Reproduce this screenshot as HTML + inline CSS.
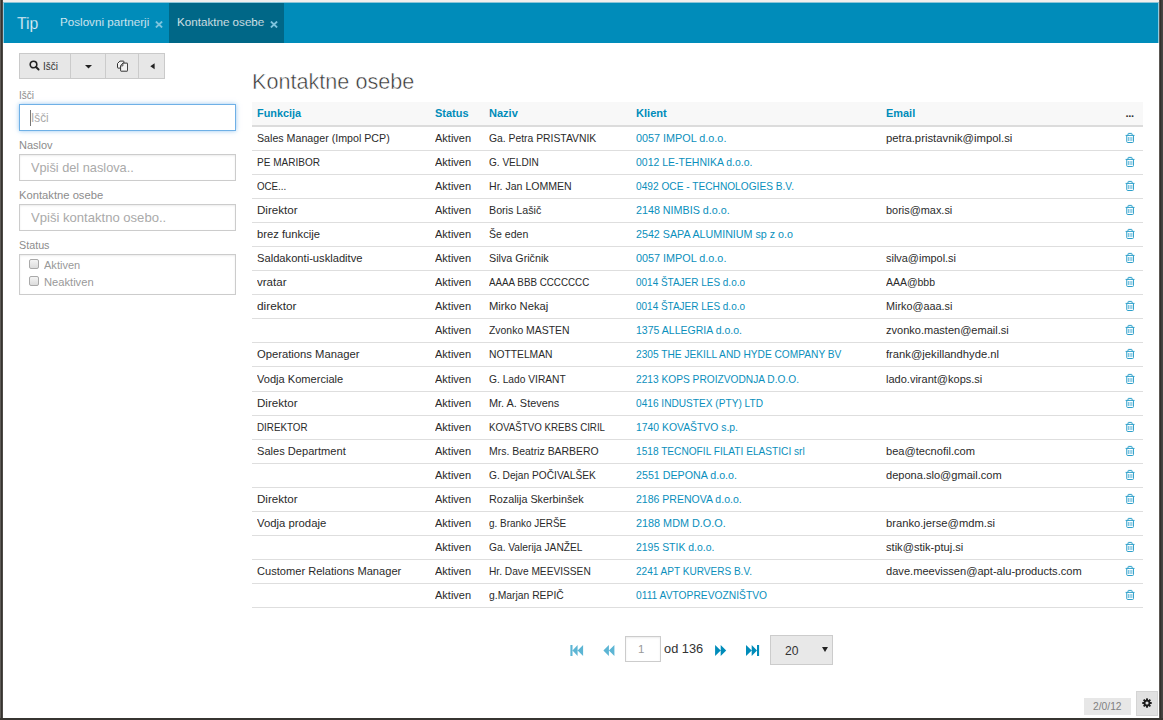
<!DOCTYPE html>
<html lang="sl">
<head>
<meta charset="utf-8">
<title>Kontaktne osebe</title>
<style>
*{box-sizing:border-box;margin:0;padding:0}
html,body{width:1163px;height:720px;overflow:hidden;background:#fff}
body{font-family:"Liberation Sans",sans-serif;font-size:11.2px;color:#222;position:relative}
.abs{position:absolute}
.sx{display:inline-block;transform-origin:0 50%;white-space:nowrap}
/* window frame */
#fl{left:0;top:0;width:3px;height:720px;background:linear-gradient(90deg,#5e5b57 0 1px,#36332f 1px 2px,#4d4a46 2px 3px)}
#fr{left:1159px;top:0;width:4px;height:720px;background:linear-gradient(90deg,#5b5854 0 1px,#33302d 1px 2px,#403e3c 2px 3px,#464543 3px 4px)}
#ft{left:3px;top:0;width:1156px;height:3px;background:#f1efed;border-bottom:1px solid #8cc5d8}
#fb{left:0;top:718px;width:1163px;height:2px;background:#373531}
#fll{left:3px;top:3px;width:1px;height:40px;background:#8fcbe0}
#frl{left:1158px;top:3px;width:1px;height:40px;background:#8fcbe0}
/* navbar */
#nav{left:4px;top:3px;width:1154px;height:40px;background:#008cba;color:#fff}
#nav .act{position:absolute;left:165px;top:0;width:115px;height:40px;background:#006787}
#nav .sx{position:absolute;color:#fff}
#t_tip{left:12.5px;top:10.8px;font-size:16.6px;color:#f2f9fc!important;-webkit-text-stroke:0.25px #008cba}
.tab{font-size:11.2px;top:13px;color:#fbfdfe!important;-webkit-text-stroke:0.22px #008cba}
#t_tab2w{-webkit-text-stroke-color:#006787}
.x{position:absolute;width:8px;height:7px}
/* left panel */
#btns{left:19px;top:53px;width:146px;height:26px;background:#e7e7e7;border:1px solid #cacaca}
#btns i{position:absolute;top:0;width:1px;height:24px;background:#cbcbcb}
.lbl{left:18.5px;font-size:11.2px;color:#8c8c8c;white-space:nowrap;line-height:13px}
.inp{left:19px;width:217px;height:27px;border:1px solid #ccc;background:#fff;box-shadow:inset 0 1px 2px rgba(0,0,0,.08);font-size:13px;color:#aaa;padding:0 0 0 10.5px;line-height:26px;white-space:nowrap}
.cb{position:absolute;width:10px;height:10px;border:1px solid #a9a9a9;border-radius:2px;background:linear-gradient(#f4f4f4,#dcdcdc)}
.cbl{position:absolute;left:23.7px;font-size:11.2px;color:#999;line-height:13px}
/* title */
#title{left:252.3px;top:68px;font-size:22.4px;color:#333;-webkit-text-stroke:0.5px #fff;white-space:nowrap;line-height:28px}
/* table */
#tbl{left:252px;top:102px;width:891px;border-collapse:separate;border-spacing:0;table-layout:fixed;font-size:11.2px}
#tbl th{height:25px;background:#f8f8f8;color:#008cba;text-align:left;font-weight:bold;padding:0 0 1px 5px;border-bottom:2px solid #dcdcdc;white-space:nowrap;line-height:13px}
#tbl td{height:24px;padding:0 0 0 5px;border-bottom:1px solid #dedede;white-space:nowrap;overflow:visible;color:#2a2a2a;line-height:13px}
#tbl tr.tall td{height:25px}
#tbl td.lk{color:#0a8fbc}
#tbl td.ic{padding:0}
.tr{width:10px;height:12px;display:block;margin-left:9px;margin-bottom:1px}
/* pager */
.pgi{position:absolute;top:645px;height:11px}
#pgin{left:625px;top:636px;width:36px;height:26px;border:1px solid #ccc;background:#fff;box-shadow:inset 0 1px 2px rgba(0,0,0,.08);font-size:11.5px;color:#999;line-height:25px;padding-left:12px}
#pgod{left:664px;top:640px;font-size:13.2px;color:#333;line-height:18px;white-space:nowrap}
#pgsel{left:770px;top:635px;width:63px;height:30px;background:#e8e8e8;border:1px solid #ccc;font-size:13.4px;color:#333;line-height:29px;padding-left:14.3px}
#pgsel:after{content:"";position:absolute;left:51px;top:10.5px;border:3px solid transparent;border-top:5px solid #222;border-bottom:0}
/* bottom right */
#cnt{left:1084px;top:698px;width:47px;height:16.5px;background:#e7e7e7;font-size:10px;color:#808080;line-height:17.5px;padding-left:9px}
#gear{left:1136px;top:691px;width:22px;height:25px;background:#e1e1e1;border:1px solid #d4d4d4}
</style>
</head>
<body>
<div id="nav" class="abs">
  <div class="act"></div>
  <span class="sx" id="t_tip" style="transform:scaleX(0.9538);">Tip</span>
  <span class="sx tab" id="t_tab1w" style="left:55.5px"><span class="sx" id="t_tab1" style="transform:scaleX(1.0405);">Poslovni partnerji</span></span><svg class="x" style="left:150.5px;top:17.6px" viewBox="0 0 8 7"><path d="M0.9 0.5L7.1 6.5M7.1 0.5L0.9 6.5" stroke="#7dc4dd" stroke-width="1.8" fill="none"/></svg>
  <span class="sx tab" id="t_tab2w" style="left:172.5px"><span class="sx" id="t_tab2" style="transform:scaleX(1.0395);">Kontaktne osebe</span></span><svg class="x" style="left:265.5px;top:17.6px" viewBox="0 0 8 7"><path d="M0.9 0.5L7.1 6.5M7.1 0.5L0.9 6.5" stroke="#7dc4dd" stroke-width="1.8" fill="none"/></svg>
</div>
<div id="fl" class="abs"></div><div id="fr" class="abs"></div><div id="ft" class="abs"></div><div id="fb" class="abs"></div>
<div id="fll" class="abs"></div><div id="frl" class="abs"></div>

<div id="btns" class="abs">
  <i style="left:50px"></i><i style="left:85px"></i><i style="left:118px"></i>
  <svg class="abs" style="left:9.1px;top:6.1px" width="11" height="11" viewBox="0 0 11 11"><circle cx="4.5" cy="4.5" r="3.3" fill="none" stroke="#222" stroke-width="1.6"/><path d="M7 7L9.6 9.5" stroke="#222" stroke-width="1.9" stroke-linecap="round"/></svg>
  <span class="abs" style="left:23px;top:6px;font-size:11.2px;color:#333;line-height:13px"><span class="sx" id="b_isci" style="transform:scaleX(0.8939);">Išči</span></span>
  <svg class="abs" style="left:65px;top:11px" width="7" height="4" viewBox="0 0 7 4"><path d="M0 0h7L3.5 3.6z" fill="#222"/></svg>
  <svg class="abs" style="left:96px;top:6px" width="12" height="12" viewBox="0 0 12 12"><g fill="#f3f3f3" stroke="#333" stroke-width="1" stroke-linejoin="round"><path d="M1.5 3.5L3.9 1.1h3.5q.5 0 .5.5v6q0 .5-.5.5H2q-.5 0-.5-.5z"/><path d="M4.6 5.8L6.9 3.1h4.2q.5 0 .5.5v7.1q0 .5-.5.5H5.1q-.5 0-.5-.5z"/><path d="M6.9 3.4v2.5H4.9" stroke-width=".8" fill="none"/></g></svg>
  <svg class="abs" style="left:130px;top:9px" width="5" height="7" viewBox="0 0 5 7"><path d="M4.6 0.3v6L0.3 3.3z" fill="#222"/></svg>
</div>
<div class="abs lbl" style="top:88.5px"><span class="sx" id="l_isci" style="transform:scaleX(0.8939);">Išči</span></div>
<div class="abs inp" style="top:104px;border-color:#6fb0e6;box-shadow:0 0 4.5px rgba(82,160,230,.6)"><i style="position:absolute;left:10px;top:5px;width:1px;height:16px;background:#777"></i><span class="sx" id="p_isci" style="transform:scaleX(0.9026);">Išči</span></div>
<div class="abs lbl" style="top:139px"><span class="sx" id="l_naslov" style="transform:scaleX(0.9824);">Naslov</span></div>
<div class="abs inp" style="top:154px"><span class="sx" id="p_naslov" style="transform:scaleX(0.9811);">Vpiši del naslova..</span></div>
<div class="abs lbl" style="top:189px"><span class="sx" id="l_kont" style="transform:scaleX(1.0026);">Kontaktne osebe</span></div>
<div class="abs inp" style="top:204px"><span class="sx" id="p_kont" style="transform:scaleX(1.0058);">Vpiši kontaktno osebo..</span></div>
<div class="abs lbl" style="top:238.5px"><span class="sx" id="l_status" style="transform:scaleX(0.9616);">Status</span></div>
<div class="abs inp" style="top:254px;height:41px;padding:0">
  <span class="cb" style="left:9px;top:4px"></span><span class="cbl" style="top:4px"><span class="sx" id="c_akt" style="transform:scaleX(0.9867);">Aktiven</span></span>
  <span class="cb" style="left:9px;top:21px"></span><span class="cbl" style="top:21px"><span class="sx" id="c_neakt" style="transform:scaleX(0.9970);">Neaktiven</span></span>
</div>

<div id="title" class="abs"><span class="sx" id="ttl" style="transform:scaleX(0.9657);">Kontaktne osebe</span></div>
<table id="tbl" class="abs">
<colgroup><col style="width:178px"><col style="width:54px"><col style="width:147px"><col style="width:250px"><col style="width:235px"><col style="width:27px"></colgroup>
<thead><tr><th><span class="sx" id="h_funkcija" style="transform:scaleX(0.9716);">Funkcija</span></th><th><span class="sx" id="h_status" style="transform:scaleX(0.9794);">Status</span></th><th><span class="sx" id="h_naziv" style="transform:scaleX(0.9851);">Naziv</span></th><th><span class="sx" id="h_klient" style="transform:scaleX(0.9911);">Klient</span></th><th><span class="sx" id="h_email" style="transform:scaleX(0.9779);">Email</span></th><th style="padding-left:9.5px"><span style="color:#333;letter-spacing:-0.3px">...</span></th></tr></thead>
<tbody>
<tr><td><span class="sx" id="r0c0" style="transform:scaleX(0.9527);">Sales Manager (Impol PCP)</span></td><td><span class="sx" id="r0c1" style="transform:scaleX(0.9840);">Aktiven</span></td><td><span class="sx" id="r0c2" style="transform:scaleX(0.9257);">Ga. Petra PRISTAVNIK</span></td><td class=lk><span class="sx" id="r0c3" style="transform:scaleX(0.9668);">0057 IMPOL d.o.o.</span></td><td><span class="sx" id="r0c4" style="transform:scaleX(1.0093);">petra.pristavnik@impol.si</span></td><td class="ic"><svg class="tr" viewBox="0 0 10 12"><g fill="none" stroke="#2c9fca" stroke-width="1"><path d="M0.6 3.4H9.5M3 3.3V2q0-.6.6-.6h2.9q.6 0 .6.6v1.3M1.75 3.6v6q0 .9.9.9h4.9q.9 0 .9-.9v-6"/><path d="M3.4 5v4M5.1 5v4M6.8 5v4" stroke-width="0.8" stroke="#48acd3"/></g></svg></td></tr>
<tr><td><span class="sx" id="r1c0" style="transform:scaleX(0.8968);">PE MARIBOR</span></td><td><span class="sx" id="r1c1" style="transform:scaleX(0.9840);">Aktiven</span></td><td><span class="sx" id="r1c2" style="transform:scaleX(0.8989);">G. VELDIN</span></td><td class=lk><span class="sx" id="r1c3" style="transform:scaleX(0.9359);">0012 LE-TEHNIKA d.o.o.</span></td><td></td><td class="ic"><svg class="tr" viewBox="0 0 10 12"><g fill="none" stroke="#2c9fca" stroke-width="1"><path d="M0.6 3.4H9.5M3 3.3V2q0-.6.6-.6h2.9q.6 0 .6.6v1.3M1.75 3.6v6q0 .9.9.9h4.9q.9 0 .9-.9v-6"/><path d="M3.4 5v4M5.1 5v4M6.8 5v4" stroke-width="0.8" stroke="#48acd3"/></g></svg></td></tr>
<tr><td><span class="sx" id="r2c0" style="transform:scaleX(0.8696);">OCE...</span></td><td><span class="sx" id="r2c1" style="transform:scaleX(0.9840);">Aktiven</span></td><td><span class="sx" id="r2c2" style="transform:scaleX(0.9440);">Hr. Jan LOMMEN</span></td><td class=lk><span class="sx" id="r2c3" style="transform:scaleX(0.9076);">0492 OCE - TECHNOLOGIES B.V.</span></td><td></td><td class="ic"><svg class="tr" viewBox="0 0 10 12"><g fill="none" stroke="#2c9fca" stroke-width="1"><path d="M0.6 3.4H9.5M3 3.3V2q0-.6.6-.6h2.9q.6 0 .6.6v1.3M1.75 3.6v6q0 .9.9.9h4.9q.9 0 .9-.9v-6"/><path d="M3.4 5v4M5.1 5v4M6.8 5v4" stroke-width="0.8" stroke="#48acd3"/></g></svg></td></tr>
<tr><td><span class="sx" id="r3c0" style="transform:scaleX(1.0365);">Direktor</span></td><td><span class="sx" id="r3c1" style="transform:scaleX(0.9840);">Aktiven</span></td><td><span class="sx" id="r3c2" style="transform:scaleX(0.9549);">Boris Lašič</span></td><td class=lk><span class="sx" id="r3c3" style="transform:scaleX(0.9596);">2148 NIMBIS d.o.o.</span></td><td><span class="sx" id="r3c4" style="transform:scaleX(0.9759);">boris@max.si</span></td><td class="ic"><svg class="tr" viewBox="0 0 10 12"><g fill="none" stroke="#2c9fca" stroke-width="1"><path d="M0.6 3.4H9.5M3 3.3V2q0-.6.6-.6h2.9q.6 0 .6.6v1.3M1.75 3.6v6q0 .9.9.9h4.9q.9 0 .9-.9v-6"/><path d="M3.4 5v4M5.1 5v4M6.8 5v4" stroke-width="0.8" stroke="#48acd3"/></g></svg></td></tr>
<tr><td><span class="sx" id="r4c0" style="transform:scaleX(1.0030);">brez funkcije</span></td><td><span class="sx" id="r4c1" style="transform:scaleX(0.9840);">Aktiven</span></td><td><span class="sx" id="r4c2" style="transform:scaleX(0.9415);">Še eden</span></td><td class=lk><span class="sx" id="r4c3" style="transform:scaleX(0.9576);">2542 SAPA ALUMINIUM sp z o.o</span></td><td></td><td class="ic"><svg class="tr" viewBox="0 0 10 12"><g fill="none" stroke="#2c9fca" stroke-width="1"><path d="M0.6 3.4H9.5M3 3.3V2q0-.6.6-.6h2.9q.6 0 .6.6v1.3M1.75 3.6v6q0 .9.9.9h4.9q.9 0 .9-.9v-6"/><path d="M3.4 5v4M5.1 5v4M6.8 5v4" stroke-width="0.8" stroke="#48acd3"/></g></svg></td></tr>
<tr><td><span class="sx" id="r5c0" style="transform:scaleX(0.9979);">Saldakonti-uskladitve</span></td><td><span class="sx" id="r5c1" style="transform:scaleX(0.9840);">Aktiven</span></td><td><span class="sx" id="r5c2" style="transform:scaleX(0.9610);">Silva Gričnik</span></td><td class=lk><span class="sx" id="r5c3" style="transform:scaleX(0.9668);">0057 IMPOL d.o.o.</span></td><td><span class="sx" id="r5c4" style="transform:scaleX(0.9767);">silva@impol.si</span></td><td class="ic"><svg class="tr" viewBox="0 0 10 12"><g fill="none" stroke="#2c9fca" stroke-width="1"><path d="M0.6 3.4H9.5M3 3.3V2q0-.6.6-.6h2.9q.6 0 .6.6v1.3M1.75 3.6v6q0 .9.9.9h4.9q.9 0 .9-.9v-6"/><path d="M3.4 5v4M5.1 5v4M6.8 5v4" stroke-width="0.8" stroke="#48acd3"/></g></svg></td></tr>
<tr><td><span class="sx" id="r6c0" style="transform:scaleX(1.0311);">vratar</span></td><td><span class="sx" id="r6c1" style="transform:scaleX(0.9840);">Aktiven</span></td><td><span class="sx" id="r6c2" style="transform:scaleX(0.8764);">AAAA BBB CCCCCCC</span></td><td class=lk><span class="sx" id="r6c3" style="transform:scaleX(0.8912);">0014 ŠTAJER LES d.o.o</span></td><td><span class="sx" id="r6c4" style="transform:scaleX(0.9347);">AAA@bbb</span></td><td class="ic"><svg class="tr" viewBox="0 0 10 12"><g fill="none" stroke="#2c9fca" stroke-width="1"><path d="M0.6 3.4H9.5M3 3.3V2q0-.6.6-.6h2.9q.6 0 .6.6v1.3M1.75 3.6v6q0 .9.9.9h4.9q.9 0 .9-.9v-6"/><path d="M3.4 5v4M5.1 5v4M6.8 5v4" stroke-width="0.8" stroke="#48acd3"/></g></svg></td></tr>
<tr><td><span class="sx" id="r7c0" style="transform:scaleX(1.0586);">direktor</span></td><td><span class="sx" id="r7c1" style="transform:scaleX(0.9840);">Aktiven</span></td><td><span class="sx" id="r7c2" style="transform:scaleX(1.0032);">Mirko Nekaj</span></td><td class=lk><span class="sx" id="r7c3" style="transform:scaleX(0.8912);">0014 ŠTAJER LES d.o.o</span></td><td><span class="sx" id="r7c4" style="transform:scaleX(0.9670);">Mirko@aaa.si</span></td><td class="ic"><svg class="tr" viewBox="0 0 10 12"><g fill="none" stroke="#2c9fca" stroke-width="1"><path d="M0.6 3.4H9.5M3 3.3V2q0-.6.6-.6h2.9q.6 0 .6.6v1.3M1.75 3.6v6q0 .9.9.9h4.9q.9 0 .9-.9v-6"/><path d="M3.4 5v4M5.1 5v4M6.8 5v4" stroke-width="0.8" stroke="#48acd3"/></g></svg></td></tr>
<tr><td></td><td><span class="sx" id="r8c1" style="transform:scaleX(0.9840);">Aktiven</span></td><td><span class="sx" id="r8c2" style="transform:scaleX(0.9315);">Zvonko MASTEN</span></td><td class=lk><span class="sx" id="r8c3" style="transform:scaleX(0.9416);">1375 ALLEGRIA d.o.o.</span></td><td><span class="sx" id="r8c4" style="transform:scaleX(0.9853);">zvonko.masten@email.si</span></td><td class="ic"><svg class="tr" viewBox="0 0 10 12"><g fill="none" stroke="#2c9fca" stroke-width="1"><path d="M0.6 3.4H9.5M3 3.3V2q0-.6.6-.6h2.9q.6 0 .6.6v1.3M1.75 3.6v6q0 .9.9.9h4.9q.9 0 .9-.9v-6"/><path d="M3.4 5v4M5.1 5v4M6.8 5v4" stroke-width="0.8" stroke="#48acd3"/></g></svg></td></tr>
<tr><td><span class="sx" id="r9c0" style="transform:scaleX(1.0049);">Operations Manager</span></td><td><span class="sx" id="r9c1" style="transform:scaleX(0.9840);">Aktiven</span></td><td><span class="sx" id="r9c2" style="transform:scaleX(0.9203);">NOTTELMAN</span></td><td class=lk><span class="sx" id="r9c3" style="transform:scaleX(0.9092);">2305 THE JEKILL AND HYDE COMPANY BV</span></td><td><span class="sx" id="r9c4" style="transform:scaleX(1.0024);">frank@jekillandhyde.nl</span></td><td class="ic"><svg class="tr" viewBox="0 0 10 12"><g fill="none" stroke="#2c9fca" stroke-width="1"><path d="M0.6 3.4H9.5M3 3.3V2q0-.6.6-.6h2.9q.6 0 .6.6v1.3M1.75 3.6v6q0 .9.9.9h4.9q.9 0 .9-.9v-6"/><path d="M3.4 5v4M5.1 5v4M6.8 5v4" stroke-width="0.8" stroke="#48acd3"/></g></svg></td></tr>
<tr class="tall"><td><span class="sx" id="r10c0" style="transform:scaleX(0.9905);">Vodja Komerciale</span></td><td><span class="sx" id="r10c1" style="transform:scaleX(0.9840);">Aktiven</span></td><td><span class="sx" id="r10c2" style="transform:scaleX(0.9142);">G. Lado VIRANT</span></td><td class=lk><span class="sx" id="r10c3" style="transform:scaleX(0.9103);">2213 KOPS PROIZVODNJA D.O.O.</span></td><td><span class="sx" id="r10c4" style="transform:scaleX(0.9847);">lado.virant@kops.si</span></td><td class="ic"><svg class="tr" viewBox="0 0 10 12"><g fill="none" stroke="#2c9fca" stroke-width="1"><path d="M0.6 3.4H9.5M3 3.3V2q0-.6.6-.6h2.9q.6 0 .6.6v1.3M1.75 3.6v6q0 .9.9.9h4.9q.9 0 .9-.9v-6"/><path d="M3.4 5v4M5.1 5v4M6.8 5v4" stroke-width="0.8" stroke="#48acd3"/></g></svg></td></tr>
<tr><td><span class="sx" id="r11c0" style="transform:scaleX(1.0365);">Direktor</span></td><td><span class="sx" id="r11c1" style="transform:scaleX(0.9840);">Aktiven</span></td><td><span class="sx" id="r11c2" style="transform:scaleX(0.9738);">Mr. A. Stevens</span></td><td class=lk><span class="sx" id="r11c3" style="transform:scaleX(0.9052);">0416 INDUSTEX (PTY) LTD</span></td><td></td><td class="ic"><svg class="tr" viewBox="0 0 10 12"><g fill="none" stroke="#2c9fca" stroke-width="1"><path d="M0.6 3.4H9.5M3 3.3V2q0-.6.6-.6h2.9q.6 0 .6.6v1.3M1.75 3.6v6q0 .9.9.9h4.9q.9 0 .9-.9v-6"/><path d="M3.4 5v4M5.1 5v4M6.8 5v4" stroke-width="0.8" stroke="#48acd3"/></g></svg></td></tr>
<tr><td><span class="sx" id="r12c0" style="transform:scaleX(0.8766);">DIREKTOR</span></td><td><span class="sx" id="r12c1" style="transform:scaleX(0.9840);">Aktiven</span></td><td><span class="sx" id="r12c2" style="transform:scaleX(0.8691);">KOVAŠTVO KREBS CIRIL</span></td><td class=lk><span class="sx" id="r12c3" style="transform:scaleX(0.9286);">1740 KOVAŠTVO s.p.</span></td><td></td><td class="ic"><svg class="tr" viewBox="0 0 10 12"><g fill="none" stroke="#2c9fca" stroke-width="1"><path d="M0.6 3.4H9.5M3 3.3V2q0-.6.6-.6h2.9q.6 0 .6.6v1.3M1.75 3.6v6q0 .9.9.9h4.9q.9 0 .9-.9v-6"/><path d="M3.4 5v4M5.1 5v4M6.8 5v4" stroke-width="0.8" stroke="#48acd3"/></g></svg></td></tr>
<tr><td><span class="sx" id="r13c0" style="transform:scaleX(0.9911);">Sales Department</span></td><td><span class="sx" id="r13c1" style="transform:scaleX(0.9840);">Aktiven</span></td><td><span class="sx" id="r13c2" style="transform:scaleX(0.9340);">Mrs. Beatriz BARBERO</span></td><td class=lk><span class="sx" id="r13c3" style="transform:scaleX(0.9055);">1518 TECNOFIL FILATI ELASTICI srl</span></td><td><span class="sx" id="r13c4" style="transform:scaleX(0.9920);">bea@tecnofil.com</span></td><td class="ic"><svg class="tr" viewBox="0 0 10 12"><g fill="none" stroke="#2c9fca" stroke-width="1"><path d="M0.6 3.4H9.5M3 3.3V2q0-.6.6-.6h2.9q.6 0 .6.6v1.3M1.75 3.6v6q0 .9.9.9h4.9q.9 0 .9-.9v-6"/><path d="M3.4 5v4M5.1 5v4M6.8 5v4" stroke-width="0.8" stroke="#48acd3"/></g></svg></td></tr>
<tr><td></td><td><span class="sx" id="r14c1" style="transform:scaleX(0.9840);">Aktiven</span></td><td><span class="sx" id="r14c2" style="transform:scaleX(0.9100);">G. Dejan POČIVALŠEK</span></td><td class=lk><span class="sx" id="r14c3" style="transform:scaleX(0.9552);">2551 DEPONA d.o.o.</span></td><td><span class="sx" id="r14c4" style="transform:scaleX(0.9882);">depona.slo@gmail.com</span></td><td class="ic"><svg class="tr" viewBox="0 0 10 12"><g fill="none" stroke="#2c9fca" stroke-width="1"><path d="M0.6 3.4H9.5M3 3.3V2q0-.6.6-.6h2.9q.6 0 .6.6v1.3M1.75 3.6v6q0 .9.9.9h4.9q.9 0 .9-.9v-6"/><path d="M3.4 5v4M5.1 5v4M6.8 5v4" stroke-width="0.8" stroke="#48acd3"/></g></svg></td></tr>
<tr><td><span class="sx" id="r15c0" style="transform:scaleX(1.0365);">Direktor</span></td><td><span class="sx" id="r15c1" style="transform:scaleX(0.9840);">Aktiven</span></td><td><span class="sx" id="r15c2" style="transform:scaleX(0.9644);">Rozalija Skerbinšek</span></td><td class=lk><span class="sx" id="r15c3" style="transform:scaleX(0.9407);">2186 PRENOVA d.o.o.</span></td><td></td><td class="ic"><svg class="tr" viewBox="0 0 10 12"><g fill="none" stroke="#2c9fca" stroke-width="1"><path d="M0.6 3.4H9.5M3 3.3V2q0-.6.6-.6h2.9q.6 0 .6.6v1.3M1.75 3.6v6q0 .9.9.9h4.9q.9 0 .9-.9v-6"/><path d="M3.4 5v4M5.1 5v4M6.8 5v4" stroke-width="0.8" stroke="#48acd3"/></g></svg></td></tr>
<tr><td><span class="sx" id="r16c0" style="transform:scaleX(1.0119);">Vodja prodaje</span></td><td><span class="sx" id="r16c1" style="transform:scaleX(0.9840);">Aktiven</span></td><td><span class="sx" id="r16c2" style="transform:scaleX(0.8873);">g. Branko JERŠE</span></td><td class=lk><span class="sx" id="r16c3" style="transform:scaleX(0.9683);">2188 MDM D.O.O.</span></td><td><span class="sx" id="r16c4" style="transform:scaleX(1.0001);">branko.jerse@mdm.si</span></td><td class="ic"><svg class="tr" viewBox="0 0 10 12"><g fill="none" stroke="#2c9fca" stroke-width="1"><path d="M0.6 3.4H9.5M3 3.3V2q0-.6.6-.6h2.9q.6 0 .6.6v1.3M1.75 3.6v6q0 .9.9.9h4.9q.9 0 .9-.9v-6"/><path d="M3.4 5v4M5.1 5v4M6.8 5v4" stroke-width="0.8" stroke="#48acd3"/></g></svg></td></tr>
<tr><td></td><td><span class="sx" id="r17c1" style="transform:scaleX(0.9840);">Aktiven</span></td><td><span class="sx" id="r17c2" style="transform:scaleX(0.9132);">Ga. Valerija JANŽEL</span></td><td class=lk><span class="sx" id="r17c3" style="transform:scaleX(0.9337);">2195 STIK d.o.o.</span></td><td><span class="sx" id="r17c4" style="transform:scaleX(0.9926);">stik@stik-ptuj.si</span></td><td class="ic"><svg class="tr" viewBox="0 0 10 12"><g fill="none" stroke="#2c9fca" stroke-width="1"><path d="M0.6 3.4H9.5M3 3.3V2q0-.6.6-.6h2.9q.6 0 .6.6v1.3M1.75 3.6v6q0 .9.9.9h4.9q.9 0 .9-.9v-6"/><path d="M3.4 5v4M5.1 5v4M6.8 5v4" stroke-width="0.8" stroke="#48acd3"/></g></svg></td></tr>
<tr><td><span class="sx" id="r18c0" style="transform:scaleX(0.9913);">Customer Relations Manager</span></td><td><span class="sx" id="r18c1" style="transform:scaleX(0.9840);">Aktiven</span></td><td><span class="sx" id="r18c2" style="transform:scaleX(0.9091);">Hr. Dave MEEVISSEN</span></td><td class=lk><span class="sx" id="r18c3" style="transform:scaleX(0.8981);">2241 APT KURVERS B.V.</span></td><td><span class="sx" id="r18c4" style="transform:scaleX(0.9919);">dave.meevissen@apt-alu-products.com</span></td><td class="ic"><svg class="tr" viewBox="0 0 10 12"><g fill="none" stroke="#2c9fca" stroke-width="1"><path d="M0.6 3.4H9.5M3 3.3V2q0-.6.6-.6h2.9q.6 0 .6.6v1.3M1.75 3.6v6q0 .9.9.9h4.9q.9 0 .9-.9v-6"/><path d="M3.4 5v4M5.1 5v4M6.8 5v4" stroke-width="0.8" stroke="#48acd3"/></g></svg></td></tr>
<tr><td></td><td><span class="sx" id="r19c1" style="transform:scaleX(0.9840);">Aktiven</span></td><td><span class="sx" id="r19c2" style="transform:scaleX(0.9248);">g.Marjan REPIČ</span></td><td class=lk><span class="sx" id="r19c3" style="transform:scaleX(0.9174);">0111 AVTOPREVOZNIŠTVO</span></td><td></td><td class="ic"><svg class="tr" viewBox="0 0 10 12"><g fill="none" stroke="#2c9fca" stroke-width="1"><path d="M0.6 3.4H9.5M3 3.3V2q0-.6.6-.6h2.9q.6 0 .6.6v1.3M1.75 3.6v6q0 .9.9.9h4.9q.9 0 .9-.9v-6"/><path d="M3.4 5v4M5.1 5v4M6.8 5v4" stroke-width="0.8" stroke="#48acd3"/></g></svg></td></tr>
</tbody>
</table>

<svg class="pgi" style="left:570px" width="14" height="11" viewBox="0 0 14 11"><path d="M0.4 0h2.1v11H0.4zM7.6 0v11L2.5 5.5zM13.1 0v11L7.6 5.5z" fill="#5cb5d4"/></svg>
<svg class="pgi" style="left:603px" width="12" height="11" viewBox="0 0 12 11"><path d="M5.9 0v11L0.4 5.5zM11.4 0v11L5.9 5.5z" fill="#5cb5d4"/></svg>
<div id="pgin" class="abs"><span class="sx" id="pg_1" style="">1</span></div>
<div id="pgod" class="abs"><span class="sx" id="pg_od" style="transform:scaleX(0.9716);">od 136</span></div>
<svg class="pgi" style="left:715px" width="12" height="11" viewBox="0 0 12 11"><path d="M0.1 0v11L5.7 5.5zM5.7 0v11L11.2 5.5z" fill="#008cba"/></svg>
<svg class="pgi" style="left:746px" width="14" height="11" viewBox="0 0 14 11"><path d="M0 0v11L5.7 5.5zM5.7 0v11L11 5.5zM11 0h2.1v11H11z" fill="#008cba"/></svg>
<div id="pgsel" class="abs"><span class="sx" id="pg_20" style="transform:scaleX(0.9057);">20</span></div>

<div id="cnt" class="abs"><span class="sx" id="cntt" style="transform:scaleX(1.0283);">2/0/12</span></div>
<div id="gear" class="abs"><svg class="abs" style="left:4.8px;top:6px" width="10" height="10" viewBox="-5.5 -5.5 11 11"><g fill="#1c1c1c"><circle r="3.7"/><rect x="-1.1" y="-5.2" width="2.2" height="10.4" rx=".4"/><rect x="-1.1" y="-5.2" width="2.2" height="10.4" rx=".4" transform="rotate(45)"/><rect x="-1.1" y="-5.2" width="2.2" height="10.4" rx=".4" transform="rotate(90)"/><rect x="-1.1" y="-5.2" width="2.2" height="10.4" rx=".4" transform="rotate(135)"/></g><circle r="1.7" fill="#e1e1e1"/></svg></div>
</body>
</html>
